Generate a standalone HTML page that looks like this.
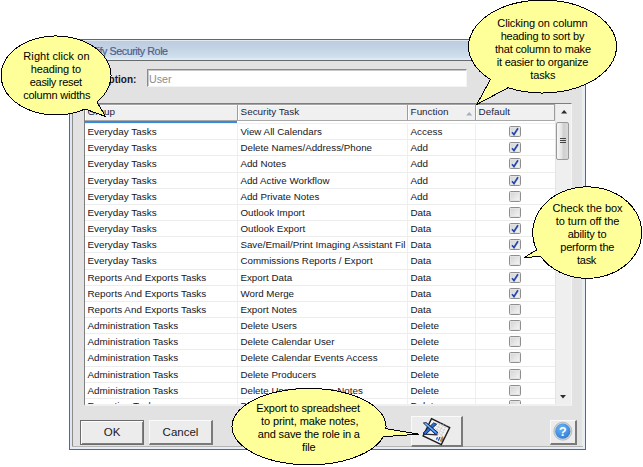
<!DOCTYPE html>
<html><head><meta charset="utf-8"><title>Modify Security Role</title>
<style>
html,body{margin:0;padding:0;background:#fff;}
body{width:643px;height:467px;position:relative;overflow:hidden;font-family:"Liberation Sans",Arial,sans-serif;}
#dlg{position:absolute;left:69px;top:39px;width:517px;height:411px;background:#e2e2e2;box-sizing:border-box;border:1px solid #666;}
/* coordinates inside dlg = page - (70,40) */
#dlg .frameL{position:absolute;left:0;top:0;width:2px;height:409px;background:#dce8f6;}
#dlg .frameL2{position:absolute;left:2px;top:21px;width:1px;height:386px;background:#8c8c8c;}
#dlg .frameR{position:absolute;left:513px;top:0;width:2px;height:409px;background:#e4edf9;}
#dlg .frameR2{position:absolute;left:512px;top:21px;width:1px;height:386px;background:#ececec;}
#dlg .frameB{position:absolute;left:0;top:407px;width:515px;height:2px;background:#e4edf9;}
#dlg .frameB2{position:absolute;left:2px;top:406px;width:511px;height:1px;background:#b4b4b4;}
#title{position:absolute;left:0;top:0;width:515px;height:20px;background:linear-gradient(#e0e8f2 0,#e0e8f2 1px,#bccde0 1px,#c3d3e4 8px,#d0dfed 17px,#dcebf8 19px,#dcebf8 20px);border-bottom:1px solid #6a6a6a;}
#title span{position:absolute;left:8px;top:4px;font-size:10.7px;letter-spacing:-0.42px;line-height:14px;color:#50608a;-webkit-text-stroke:0.2px #50608a;white-space:nowrap;}
#lbl{position:absolute;left:8px;top:34px;font-size:10px;font-weight:bold;color:#16162a;line-height:12px;white-space:nowrap;}
#inp{position:absolute;left:77px;top:29px;width:320px;height:18px;box-sizing:border-box;background:#fff;border:1px solid #8a8a8a;border-right-color:#f4f4f4;border-bottom-color:#f4f4f4;box-shadow:inset 1px 1px 0 #c8c8c8;}
#inp span{position:absolute;left:1px;top:2.5px;font-size:10.67px;line-height:12px;color:#8c8c8c;}
#tbl{position:absolute;left:14px;top:63px;width:488px;height:303px;box-sizing:border-box;background:#fff;border:1px solid #7e7e7e;border-right-color:#f6f6f6;border-bottom:2px solid #f0f0f0;overflow:hidden;}
/* inside tbl coords = page - (85,104) */
#hdr{position:absolute;left:0;top:0;width:470px;height:17px;background:#f0f0f0;border-bottom:1px solid #a8a8a8;box-sizing:border-box;border-top:1px solid #a4a4a4;box-shadow:inset 0 1px 0 #fafafa;}
.h{position:absolute;top:0;height:15px;font-size:9.9px;line-height:14.2px;color:#1c2440;white-space:nowrap;box-sizing:border-box;border-left:1px solid #fff;border-right:1px solid #9c9c9c;padding-left:1.6px;}
#sortline{position:absolute;left:0;top:16.6px;width:152px;height:2.4px;background:#3b8ad9;}
.r{position:absolute;left:0;width:470px;box-sizing:border-box;border-bottom:1px solid #ececec;font-size:9.9px;color:#15151c;white-space:nowrap;}
.c{position:absolute;top:0;height:100%;line-height:16px;box-sizing:border-box;border-right:1px solid #efefef;padding-left:2.4px;overflow:hidden;letter-spacing:0.02px;}
.g{left:0;width:153px;}
.t{left:153px;width:170px;font-size:9.75px;}
.f{left:323px;width:68px;}
.cb{position:absolute;left:424px;top:1.5px;width:12px;height:11.6px;box-sizing:border-box;border:1px solid #8e8e8e;border-radius:1.5px;background:linear-gradient(135deg,#d2d2d2,#f6f6f6);box-shadow:inset 0 0 0 1px #e4e4e4;}
.cb svg{position:absolute;left:-1px;top:-0.6px;}
#sb{position:absolute;left:470px;top:0;width:16px;height:300px;background:#efefef;border-left:1px solid #e4e4e4;box-sizing:border-box;}
#thumb{position:absolute;left:0px;top:18px;width:13px;height:38px;box-sizing:border-box;border:1px solid #989898;border-radius:2px;background:linear-gradient(90deg,#f8f8f8,#e6e6e6 40%,#cfcfcf 60%,#dadada);}
#thumb i{position:absolute;left:2.5px;width:6px;height:1px;background:#444;}
.btn{position:absolute;box-sizing:border-box;background:#ececec;border:1px solid #fafafa;border-right:2px solid #7a7a7a;border-bottom:2px solid #7a7a7a;font-size:11.5px;color:#1a1a24;text-align:center;}
.bl{position:absolute;font-size:11px;line-height:13px;color:#000;white-space:nowrap;}
#ov{position:absolute;left:0;top:0;}
</style></head><body>
<div id="dlg">
 <div id="title"><span>Modify Security Role</span></div>
 <div class="frameL"></div><div class="frameL2"></div><div class="frameR2"></div><div class="frameR"></div><div class="frameB2"></div><div class="frameB"></div>
 <div id="lbl">Description:</div>
 <div id="inp"><span>User</span></div>
 <div id="tbl">
  <div id="hdr">
   <div class="h" style="left:0;width:153px">Group</div>
   <div class="h" style="left:153px;width:170px">Security Task</div>
   <div class="h" style="left:323px;width:68px">Function<svg style="position:absolute;left:57.2px;top:7.3px" width="6.4" height="3.5" viewBox="0 0 7 4"><path d="M0 4 L3.5 0 L7 4 Z" fill="#a4afc0"/></svg></div>
   <div class="h" style="left:391px;width:79px">Default</div>
  </div>
  <div id="sortline"></div><div style="position:absolute;left:0;top:19px;width:470px;height:1px;background:#f0f0f0"></div>
  <div id="rows" style="position:absolute;left:0;top:0;width:470px;height:300px;">
<div class="r" style="top:20px;height:16px"><span class="c g">Everyday Tasks</span><span class="c t">View All Calendars</span><span class="c f">Access</span><span class="cb on"><svg viewBox="0 0 12 11" width="12" height="11"><path d="M3 6.2 L5 8.5 L9 2.3" fill="none" stroke="#2646ac" stroke-width="1.7"/></svg></span></div>
<div class="r" style="top:36px;height:16px"><span class="c g">Everyday Tasks</span><span class="c t">Delete Names/Address/Phone</span><span class="c f">Add</span><span class="cb on"><svg viewBox="0 0 12 11" width="12" height="11"><path d="M3 6.2 L5 8.5 L9 2.3" fill="none" stroke="#2646ac" stroke-width="1.7"/></svg></span></div>
<div class="r" style="top:52px;height:17px"><span class="c g">Everyday Tasks</span><span class="c t">Add Notes</span><span class="c f">Add</span><span class="cb on"><svg viewBox="0 0 12 11" width="12" height="11"><path d="M3 6.2 L5 8.5 L9 2.3" fill="none" stroke="#2646ac" stroke-width="1.7"/></svg></span></div>
<div class="r" style="top:69px;height:16px"><span class="c g">Everyday Tasks</span><span class="c t">Add Active Workflow</span><span class="c f">Add</span><span class="cb on"><svg viewBox="0 0 12 11" width="12" height="11"><path d="M3 6.2 L5 8.5 L9 2.3" fill="none" stroke="#2646ac" stroke-width="1.7"/></svg></span></div>
<div class="r" style="top:85px;height:16px"><span class="c g">Everyday Tasks</span><span class="c t">Add Private Notes</span><span class="c f">Add</span><span class="cb"></span></div>
<div class="r" style="top:101px;height:16px"><span class="c g">Everyday Tasks</span><span class="c t">Outlook Import</span><span class="c f">Data</span><span class="cb"></span></div>
<div class="r" style="top:117px;height:16px"><span class="c g">Everyday Tasks</span><span class="c t">Outlook Export</span><span class="c f">Data</span><span class="cb on"><svg viewBox="0 0 12 11" width="12" height="11"><path d="M3 6.2 L5 8.5 L9 2.3" fill="none" stroke="#2646ac" stroke-width="1.7"/></svg></span></div>
<div class="r" style="top:133px;height:16px"><span class="c g">Everyday Tasks</span><span class="c t">Save/Email/Print Imaging Assistant Fil</span><span class="c f">Data</span><span class="cb on"><svg viewBox="0 0 12 11" width="12" height="11"><path d="M3 6.2 L5 8.5 L9 2.3" fill="none" stroke="#2646ac" stroke-width="1.7"/></svg></span></div>
<div class="r" style="top:149px;height:17px"><span class="c g">Everyday Tasks</span><span class="c t">Commissions Reports / Export</span><span class="c f">Data</span><span class="cb"></span></div>
<div class="r" style="top:166px;height:16px"><span class="c g">Reports And Exports Tasks</span><span class="c t">Export Data</span><span class="c f">Data</span><span class="cb on"><svg viewBox="0 0 12 11" width="12" height="11"><path d="M3 6.2 L5 8.5 L9 2.3" fill="none" stroke="#2646ac" stroke-width="1.7"/></svg></span></div>
<div class="r" style="top:182px;height:16px"><span class="c g">Reports And Exports Tasks</span><span class="c t">Word Merge</span><span class="c f">Data</span><span class="cb on"><svg viewBox="0 0 12 11" width="12" height="11"><path d="M3 6.2 L5 8.5 L9 2.3" fill="none" stroke="#2646ac" stroke-width="1.7"/></svg></span></div>
<div class="r" style="top:198px;height:16px"><span class="c g">Reports And Exports Tasks</span><span class="c t">Export Notes</span><span class="c f">Data</span><span class="cb"></span></div>
<div class="r" style="top:214px;height:16px"><span class="c g">Administration Tasks</span><span class="c t">Delete Users</span><span class="c f">Delete</span><span class="cb"></span></div>
<div class="r" style="top:230px;height:16px"><span class="c g">Administration Tasks</span><span class="c t">Delete Calendar User</span><span class="c f">Delete</span><span class="cb"></span></div>
<div class="r" style="top:246px;height:17px"><span class="c g">Administration Tasks</span><span class="c t">Delete Calendar Events Access</span><span class="c f">Delete</span><span class="cb"></span></div>
<div class="r" style="top:263px;height:16px"><span class="c g">Administration Tasks</span><span class="c t">Delete Producers</span><span class="c f">Delete</span><span class="cb"></span></div>
<div class="r" style="top:279px;height:16px"><span class="c g">Administration Tasks</span><span class="c t">Delete User Message Notes</span><span class="c f">Delete</span><span class="cb"></span></div>
<div class="r" style="top:294px;height:17px"><span class="c g">Reporting Tasks</span><span class="c t">Delete Report Templates</span><span class="c f">Delete</span><span class="cb"></span></div>
  </div>
  <div id="sb" style="top:0;height:300px"><svg style="position:absolute;left:4.6px;top:6.4px" width="6.2" height="3.5" viewBox="0 0 7 4"><path d="M0 4 L3.5 0 L7 4 Z" fill="#2c2c2c"/></svg><div id="thumb" style="top:18px"><i style="top:15px"></i><i style="top:17px"></i><i style="top:19px"></i></div>
   <svg style="position:absolute;left:4px;top:291.2px" width="6" height="3.4" viewBox="0 0 7 4"><path d="M0 0 L7 0 L3.5 4 Z" fill="#2c2c2c"/></svg></div>
 </div>
 <div class="btn" style="left:10px;top:380px;width:64px;height:25px;line-height:23px;border:1px solid #6c6c6c;box-shadow:inset 1px 1px 0 #fcfcfc,inset -1px -1px 0 #808080">OK</div>
 <div class="btn" style="left:79px;top:380px;width:64px;height:25px;line-height:23px;">Cancel</div>
 <div class="btn" style="left:341px;top:376px;width:52px;height:31px;"></div>
 <div class="btn" style="left:480px;top:380px;width:27px;height:25px;"></div>
</div>
<svg id="ov" width="643" height="467" viewBox="0 0 643 467">
 <defs>
  <linearGradient id="xb" x1="0" y1="0" x2="1" y2="1"><stop offset="0" stop-color="#6db3f5"/><stop offset="1" stop-color="#1f5fc4"/></linearGradient>
  <radialGradient id="hb" cx="0.4" cy="0.3" r="0.8"><stop offset="0" stop-color="#6ab4f4"/><stop offset="1" stop-color="#2a7ad6"/></radialGradient>
 </defs>
 <!-- export icon -->
 <g>
  <path d="M431.5 418.7 L449.7 427.5 L441.3 444.6 L423.1 435.9 Z" fill="#f3f3f3" stroke="#1c1c1c" stroke-width="1.4" stroke-linejoin="miter"/>
  <path d="M437.2 423.4 L447 428.1 M436 425.9 L445.8 430.6 M434.8 428.4 L444.6 433.1 M433.6 430.9 L443.4 435.6 M440.6 422.6 L435.2 433.6 M443.4 424 L438 435 M446.2 425.4 L440.8 436.4" stroke="#bdbdbd" stroke-width="0.7" fill="none" stroke-dasharray="1.2 0.6"/>
  <path d="M424 434.2 L437.6 434.9" stroke="#2a2a34" stroke-width="1.2"/>
  <path d="M433.6 422.9 L436.6 424.2 L425.6 434.4 L423 433.2 Z" fill="#2a6fd6" stroke="#101c48" stroke-width="0.9"/>
  <path d="M423.4 423 L426.2 422.6 L438 432.6 L435.6 434.6 Z" fill="url(#xb)" stroke="#101c48" stroke-width="0.9"/>
  <path d="M425.2 423.6 L436.4 433" stroke="#7cc4ff" stroke-width="0.9"/>
  <path d="M436.4 439.6 L437.6 437.2 M438.3 440.8 L440 437" stroke="#2452c4" stroke-width="1.3"/>
  <path d="M440.4 441.6 L442.6 436.4" stroke="#c8741c" stroke-width="1.4"/>
  <path d="M441.6 441.8 L443.4 437.6" stroke="#222" stroke-width="0.6"/>
 </g>
 <!-- help icon -->
 <circle cx="562.8" cy="431.2" r="9" fill="#d4d4d4" stroke="#b0b0b0" stroke-width="0.8"/>
 <circle cx="562.8" cy="431.2" r="7.6" fill="url(#hb)"/>
 <text x="562.8" y="435.6" font-family="Liberation Sans, Arial, sans-serif" font-size="12.5" font-weight="bold" fill="#fff" text-anchor="middle">?</text>
 <!-- balloons -->
 <g fill="#ffff99" stroke="#000" stroke-width="1" shape-rendering="crispEdges">
  <path d="M96.9 101.9 A55 39.5 0 1 0 85.1 109.0 L105.5 116.5 Z"/>
  <path d="M490.4 79.5 A74 46.5 0 1 1 508.2 87.7 L476.8 104.4 Z"/>
  <path d="M536.7 249.8 A54.5 45.75 0 1 1 540.8 256.6 L524.4 257.4 Z"/>
  <path d="M385.9 428.7 A77 38.25 0 1 0 383.3 436.7 L418.8 434.2 Z"/>
 </g>
</svg>
<span class="bl" style="left:23.36px;top:50.10px;letter-spacing:0.064px">Right click on</span>
<span class="bl" style="left:30.72px;top:63.10px;letter-spacing:-0.118px">heading to</span>
<span class="bl" style="left:29.78px;top:75.90px;letter-spacing:-0.303px">easily reset</span>
<span class="bl" style="left:23.14px;top:88.80px;letter-spacing:-0.190px">column widths</span>
<span class="bl" style="left:497.31px;top:17.00px;letter-spacing:-0.111px">Clicking on column</span>
<span class="bl" style="left:500.67px;top:30.00px;letter-spacing:-0.216px">heading to sort by</span>
<span class="bl" style="left:494.91px;top:43.00px;letter-spacing:-0.162px">that column to make</span>
<span class="bl" style="left:496.78px;top:56.00px;letter-spacing:-0.217px">it easier to organize</span>
<span class="bl" style="left:530.17px;top:68.90px;letter-spacing:-0.087px">tasks</span>
<span class="bl" style="left:552.49px;top:201.90px;letter-spacing:-0.019px">Check the box</span>
<span class="bl" style="left:555.85px;top:214.80px;letter-spacing:-0.074px">to turn off the</span>
<span class="bl" style="left:567.63px;top:227.80px;letter-spacing:-0.162px">ability to</span>
<span class="bl" style="left:560.27px;top:240.80px;letter-spacing:-0.206px">perform the</span>
<span class="bl" style="left:576.99px;top:253.70px;letter-spacing:-0.265px">task</span>
<span class="bl" style="left:256.34px;top:401.80px;letter-spacing:-0.193px">Export to spreadsheet</span>
<span class="bl" style="left:261.11px;top:414.90px;letter-spacing:-0.116px">to print, make notes,</span>
<span class="bl" style="left:257.73px;top:427.90px;letter-spacing:-0.140px">and save the role in a</span>
<span class="bl" style="left:301.98px;top:440.70px;letter-spacing:-0.128px">file</span>
</body></html>
